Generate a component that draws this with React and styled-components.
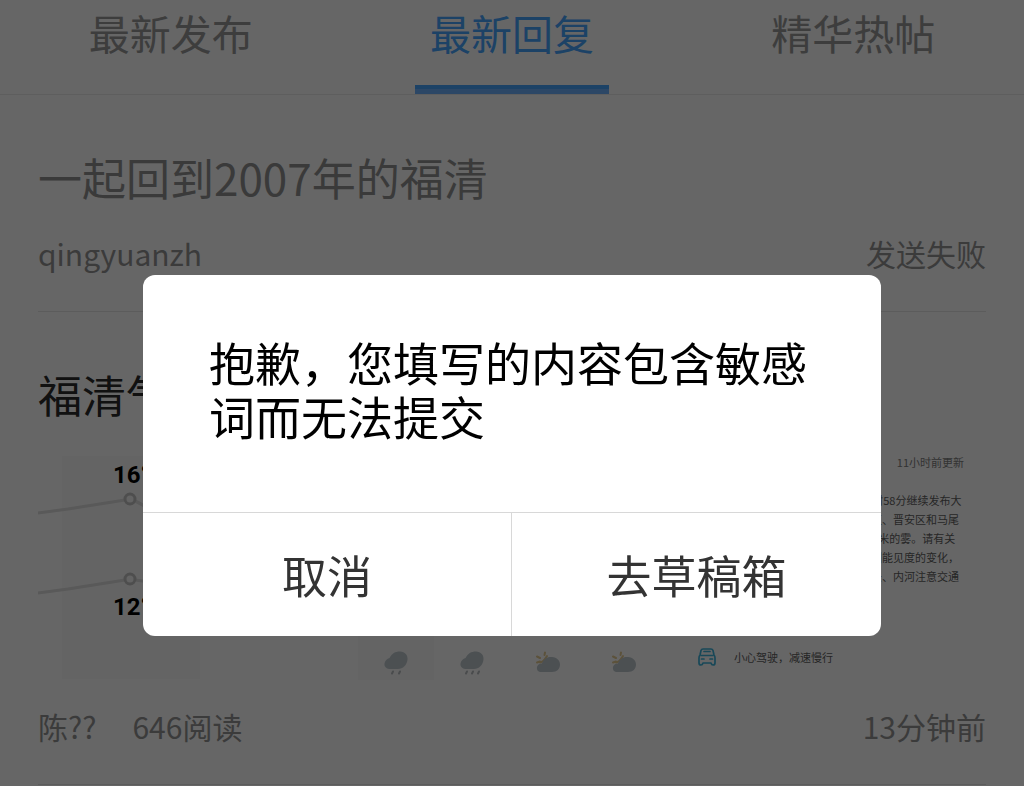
import React, { useState } from "react";
import styled, { createGlobalStyle } from "styled-components";

const GlobalStyle = createGlobalStyle`
  *, *::before, *::after { box-sizing: border-box; }
  body {
    margin: 0;
    background: #fff;
    color: #333;
    font-family: "Noto Sans CJK SC", "Noto Sans", sans-serif;
  }
  button { font-family: inherit; }
  h2, p { margin: 0; font-weight: 400; }
`;

const Tabs = styled.div`
  display: grid;
  grid-template-columns: repeat(3, 1fr);
  border-bottom: 1px solid #ebebeb;
`;

const Tab = styled.button`
  display: flex;
  flex-direction: column;
  align-items: center;
  justify-content: space-between;
  height: 94px;
  padding: 2px 0 0;
  border: 0;
  background: none;
  font-size: 41px;
  line-height: 60px;
  color: ${(p) => (p.$active ? "#48a5ff" : "#999")};

  &::after {
    content: "";
    width: 194px;
    height: 9px;
    background: ${(p) =>
      p.$active ? "linear-gradient(#48a5ff 44%, #6eb2ff 44%)" : "none"};
  }
`;

const Feed = styled.main`
  padding: 0 38px;
`;

const Post = styled.article`
  padding: 52px 0 38px;
  border-bottom: 1px solid #e6e6e6;
`;

const Title = styled.h2`
  font-size: 44px;
  line-height: 60px;
  color: ${(p) => (p.$read ? "#919191" : "#2b2b2b")};
  white-space: nowrap;
`;

const Meta = styled.footer`
  display: flex;
  gap: 36px;
  margin-top: 26px;
  font-size: 30px;
  line-height: 40px;
  color: #949494;
`;

const MetaEnd = styled.span`
  margin-left: auto;
`;

const Media = styled.div`
  display: grid;
  grid-template-columns: repeat(3, minmax(0, 1fr));
  gap: 12px;
  height: 224px;
  margin-top: 32px;
`;

const Chart = styled.svg`
  display: block;
  height: 224px;
  width: 308px;
  font: 700 24px Roboto, sans-serif;
`;

const Forecast = styled.div`
  display: grid;
  grid-template-columns: repeat(4, 76px);
`;

const Day = styled.div`
  display: flex;
  align-items: flex-end;
  justify-content: center;
  padding-bottom: 4px;
  background: ${(p) => (p.$today ? "#f9fafa" : "none")};
`;

const Notice = styled.div`
  display: flex;
  flex-direction: column;
  justify-content: space-between;
  padding: 0 22px 14px 20px;
  font-size: 11px;
  line-height: 18px;
  color: #606060;
  white-space: nowrap;
`;

const Updated = styled.p`
  align-self: flex-end;
  line-height: 12px;
  color: #808080;
`;

const Warning = styled.p`
  align-self: flex-end;
  width: 115px;
  margin-bottom: 40px;
  line-height: 19px;
`;

const Advice = styled.p`
  display: flex;
  align-items: center;
  gap: 18px;
`;

const Overlay = styled.div`
  position: fixed;
  inset: 0;
  padding: 275px 143px 0;
  background: rgba(0, 0, 0, 0.6);
`;

const Dialog = styled.section`
  overflow: hidden;
  border-radius: 12px;
  background: #fff;
`;

const Message = styled.p`
  padding: 59px 66px 70px;
  font-size: 46px;
  line-height: 54px;
  color: #000;
`;

const Actions = styled.div`
  display: grid;
  grid-template-columns: 1fr 1fr;
  border-top: 1px solid #d8d8d8;
`;

const Action = styled.button`
  height: 123px;
  padding: 0;
  border: 0;
  background: none;
  font-size: 45px;
  line-height: 60px;
  color: #333;

  &:first-child { border-right: 1px solid #d8d8d8; }
`;

function RainIcon({ drops }) {
  return (
    <svg width="26" height="26" viewBox="0 0 26 26" aria-hidden="true">
      <path
        d="M8 19C3.500 19 1 17 1.500 13.500C2 10.500 4 9 6.500 8C9 3.500 12 1.500 17 1.500C22 2 25 5 24.500 9.500C24 15 20 19 15 19Z"
        fill="#bec8ce"
      />
      {drops.map((x) => (
        <path key={x} d={`M${x} 21.500l-1 2`} stroke="#b8bdc0" strokeWidth="2" strokeLinecap="round" />
      ))}
    </svg>
  );
}

function SunCloudIcon() {
  return (
    <svg width="26" height="26" viewBox="0 0 26 26" aria-hidden="true">
      <g stroke="#e6cc93" strokeWidth="2" fill="none" strokeLinecap="round">
        <path d="M2 6.500l3 1.500M10 2.500L9.500 5M2 12.500l3-1" />
        <path d="M5 12.500C9 12 10 9 12 6" />
      </g>
      <path
        d="M6.500 22C3 22 1.500 20 2 17C2.500 14.500 5 13.500 7 13.500C8.500 9 12 6.500 17 7C22 7.500 25 10.500 25 14.500C25 19 22 22 17 22Z"
        fill="#bec8ce"
      />
    </svg>
  );
}

function CarIcon() {
  return (
    <svg
      width="18"
      height="18"
      viewBox="0 0 18 18"
      fill="none"
      stroke="#3cb4dc"
      strokeWidth="1.700"
      strokeLinejoin="round"
      strokeLinecap="round"
      aria-hidden="true"
    >
      <path d="M2 7L3 2.500Q3.500 1 5 1H13Q14.500 1 15 2.500L16 7Q17 8 17 10V15Q17 17 15 17Q13.500 17 13 15H5Q4.500 17 3 17Q1 17 1 15V10Q1 8 2 7Z" />
      <path d="M3 7.500H15M6 3.500H12" />
      <path d="M3.500 11H6M12 11H14.500" />
    </svg>
  );
}

function TemperatureChart() {
  return (
    <Chart viewBox="0 0 308 224" role="img" aria-label="16° / 12°">
      <rect x="24" width="138" height="223" fill="#fafafa" />
      <g fill="none" stroke="#dedede" strokeWidth="3">
        <path d="M0 57L30 53L87 44M97 45Q104 48 114 55" />
        <path d="M0 137L30 133L87 124M97 124L120 127" />
      </g>
      <g fill="#f8f8f8" stroke="#c4c4c4" strokeWidth="3">
        <circle cx="92" cy="43" r="5" />
        <circle cx="92" cy="123" r="5" />
      </g>
      <text x="75" y="27">16°</text>
      <text x="75" y="159">12°</text>
    </Chart>
  );
}

const TABS = ["最新发布", "最新回复", "精华热帖"];
const WARNING_LINES = [
  "日07时58分继续发布大",
  "长乐区、晋安区和马尾",
  "于200米的雾。请有关",
  "注意因能见度的变化，",
  "、码头、内河注意交通",
];

export default function App() {
  const [active, setActive] = useState(1);
  const [open, setOpen] = useState(true);

  return (
    <>
      <GlobalStyle />
      <Tabs role="tablist">
        {TABS.map((label, i) => (
          <Tab
            key={label}
            role="tab"
            aria-selected={i === active}
            $active={i === active}
            onClick={() => setActive(i)}
          >
            {label}
          </Tab>
        ))}
      </Tabs>
      <Feed>
        <Post>
          <Title $read>一起回到2007年的福清</Title>
          <Meta>
            <span>qingyuanzh</span>
            <MetaEnd>发送失败</MetaEnd>
          </Meta>
        </Post>
        <Post>
          <Title>福清气</Title>
          <Media>
            <TemperatureChart />
            <Forecast>
              <Day $today><RainIcon drops={[10, 17]} /></Day>
              <Day><RainIcon drops={[8, 14, 20]} /></Day>
              <Day><SunCloudIcon /></Day>
              <Day><SunCloudIcon /></Day>
            </Forecast>
            <Notice>
              <Updated>11小时前更新</Updated>
              <Warning>
                {WARNING_LINES.map((line) => (
                  <React.Fragment key={line}>{line}<br /></React.Fragment>
                ))}
              </Warning>
              <Advice><CarIcon />小心驾驶，减速慢行</Advice>
            </Notice>
          </Media>
          <Meta>
            <span>陈??</span>
            <span>646阅读</span>
            <MetaEnd>13分钟前</MetaEnd>
          </Meta>
        </Post>
      </Feed>
      {open && (
        <Overlay>
          <Dialog role="alertdialog" aria-modal="true" aria-describedby="message">
            <Message id="message">抱歉，您填写的内容包含敏感词而无法提交</Message>
            <Actions>
              <Action onClick={() => setOpen(false)}>取消</Action>
              <Action onClick={() => setOpen(false)}>去草稿箱</Action>
            </Actions>
          </Dialog>
        </Overlay>
      )}
    </>
  );
}
